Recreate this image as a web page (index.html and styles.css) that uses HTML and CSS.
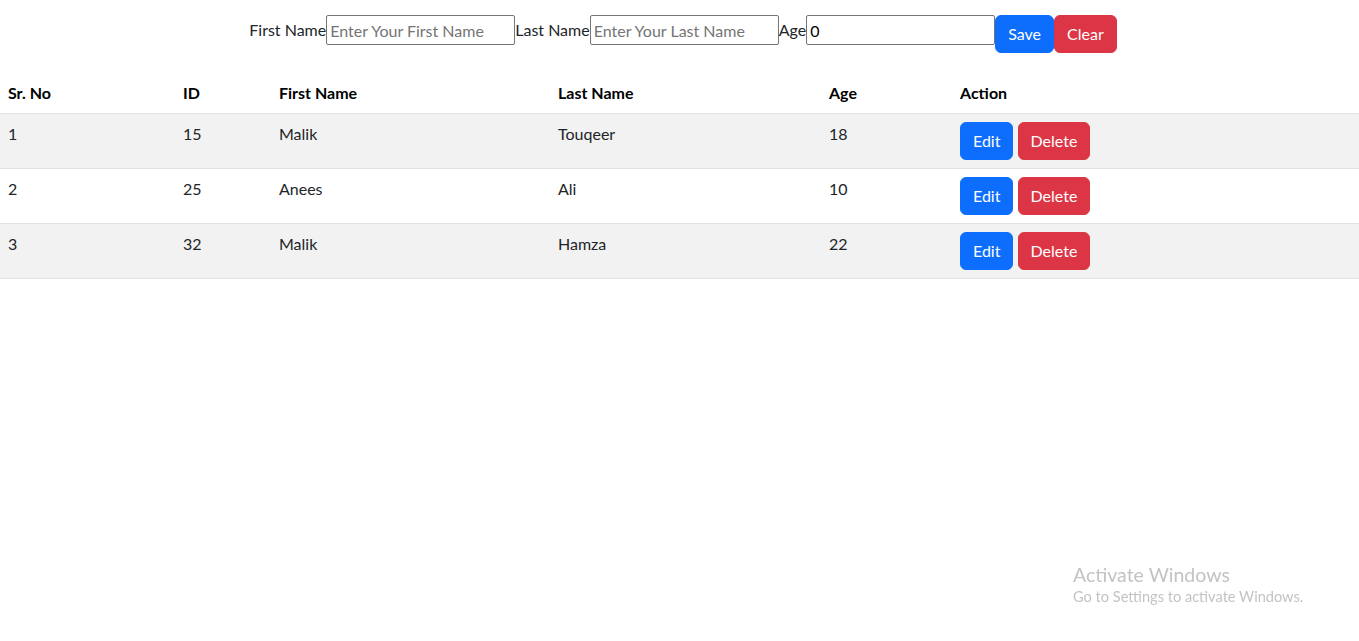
FILE: index.html
```html
<!DOCTYPE html>
<html lang="en">
<head>
    <meta charset="UTF-8">
    <meta name="viewport" content="width=device-width, initial-scale=1.0">
    <title>Students</title>
    <link rel="stylesheet" href="styles.css">
</head>
<body>

    <div class="form-row">
        <label for="firstName">First Name</label><input id="firstName" type="text" placeholder="Enter Your First Name"><label for="lastName">Last Name</label><input id="lastName" type="text" placeholder="Enter Your Last Name"><label for="age">Age</label><input id="age" type="number" value="0"><button class="btn btn-primary">Save</button><button class="btn btn-danger">Clear</button>
    </div>

    <table class="table">
        <colgroup>
            <col style="width: 175px">
            <col style="width: 96px">
            <col style="width: 279px">
            <col style="width: 271px">
            <col style="width: 131px">
            <col>
        </colgroup>
        <thead>
            <tr>
                <th>Sr. No</th>
                <th>ID</th>
                <th>First Name</th>
                <th>Last Name</th>
                <th>Age</th>
                <th>Action</th>
            </tr>
        </thead>
        <tbody>
            <tr>
                <td>1</td>
                <td>15</td>
                <td>Malik</td>
                <td>Touqeer</td>
                <td>18</td>
                <td><button class="btn btn-primary">Edit</button> <button class="btn btn-danger">Delete</button></td>
            </tr>
            <tr>
                <td>2</td>
                <td>25</td>
                <td>Anees</td>
                <td>Ali</td>
                <td>10</td>
                <td><button class="btn btn-primary">Edit</button> <button class="btn btn-danger">Delete</button></td>
            </tr>
            <tr>
                <td>3</td>
                <td>32</td>
                <td>Malik</td>
                <td>Hamza</td>
                <td>22</td>
                <td><button class="btn btn-primary">Edit</button> <button class="btn btn-danger">Delete</button></td>
            </tr>
        </tbody>
    </table>

    <div class="watermark">
        <div class="watermark-title">Activate Windows</div>
        <div class="watermark-sub">Go to Settings to activate Windows.</div>
    </div>

</body>
</html>
```

FILE: styles.css
```css
body {
    margin: 0;
    font-family: Lato, 'Liberation Sans', sans-serif;
    font-size: 16px;
    line-height: 1.5;
    color: #212529;
    background-color: #fff;
}
.form-row {
    display: flex;
    justify-content: center;
    align-items: flex-start;
    padding-top: 15px;
    padding-left: 7px;
    margin-bottom: 20px;
}
.form-row label {
    line-height: 30px;
    font-size: 16px;
}
.form-row input {
    box-sizing: border-box;
    width: 189px;
    height: 30px;
    margin: 0;
    padding: 1px 3px;
    font-family: inherit;
    font-size: 16px;
    color: #000;
    border: 1px solid #767676;
    border-radius: 2px;
}
.form-row input::placeholder {
    color: #757575;
}
.form-row input::-webkit-inner-spin-button {
    -webkit-appearance: none;
}
.btn {
    display: inline-block;
    padding: 6px 12px;
    font-family: inherit;
    font-size: 16px;
    line-height: 24px;
    color: #fff;
    border: 1px solid transparent;
    border-radius: 6px;
    cursor: pointer;
}
.btn-primary {
    background-color: #0d6efd;
    border-color: #0d6efd;
}
.btn-danger {
    background-color: #dc3545;
    border-color: #dc3545;
}
.table {
    width: 100%;
    table-layout: fixed;
    border-collapse: collapse;
    color: #212529;
}
.table th, .table td {
    padding: 8px;
    text-align: left;
    vertical-align: top;
    border-bottom: 1px solid #dee2e6;
}
.table th {
    font-weight: bold;
    color: #000;
}
.table tbody tr:nth-child(odd) td {
    background-color: #f2f2f2;
}
.watermark {
    position: fixed;
    left: 1073px;
    top: 563px;
    color: #c3c3c3;
    line-height: 1.2;
}
.watermark-title {
    font-size: 19.5px;
}
.watermark-sub {
    font-size: 14.6px;
    margin-top: 2px;
}
```
